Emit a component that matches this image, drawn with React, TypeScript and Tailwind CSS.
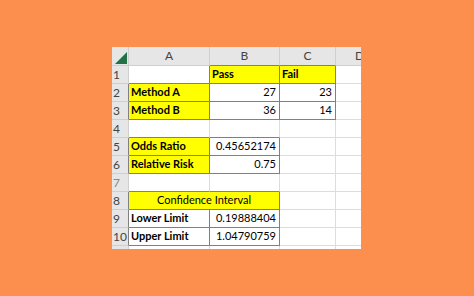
import clsx from 'clsx'

type Cell = { t?: string, b?: boolean, y?: boolean, box?: boolean, r?: boolean, c?: boolean, span?: number }

const colLetters = ['A','B','C','D']

// rows 1..11, columns A..D
const data: Cell[][] = [
  [{}, { t:'Pass', b:true, y:true, box:true }, { t:'Fail', b:true, y:true, box:true }, {}],
  [{ t:'Method A', b:true, y:true, box:true }, { t:'27', r:true, box:true }, { t:'23', r:true, box:true }, {}],
  [{ t:'Method B', b:true, y:true, box:true }, { t:'36', r:true, box:true }, { t:'14', r:true, box:true }, {}],
  [{}, {}, {}, {}],
  [{ t:'Odds Ratio', b:true, y:true, box:true }, { t:'0.45652174', r:true, box:true }, {}, {}],
  [{ t:'Relative Risk', b:true, y:true, box:true }, { t:'0.75', r:true, box:true }, {}, {}],
  [{}, {}, {}, {}],
  [{ t:'Confidence Interval', y:true, box:true, c:true, span:2 }, { box:true }, {}, {}],
  [{ t:'Lower Limit', b:true, box:true }, { t:'0.19888404', r:true, box:true }, {}, {}],
  [{ t:'Upper Limit', b:true, box:true }, { t:'1.04790759', r:true, box:true }, {}, {}],
  [{}, {}, {}, {}],
]

const boxed = (r:number, c:number) => !!data[r]?.[c]?.box

export default function App(){
  return (
    <div className="w-[474px] h-[296px] bg-[#fd8f4e] pl-[112px] pt-[47px]" style={{ fontFamily: 'Lato, "Liberation Sans", sans-serif' }}>
      <div className="w-[249px] h-[202px] overflow-hidden bg-white">
        <div className="grid grid-cols-[17px_81px_70px_56px_48px] grid-rows-[19px_repeat(11,18px)] w-[272px]">
          {/* corner */}
          <div className="relative bg-[#e6e6e6] border-r border-b border-[#cfcfcf]">
            <svg className="absolute right-[1px] bottom-[1px]" width="12" height="12" viewBox="0 0 12 12">
              <polygon points="12,0 12,12 0,12" fill="#217346" />
            </svg>
          </div>
          {colLetters.map((l, c) => (
            <div key={l} className={clsx('bg-[#e6e6e6] border-r border-[#cfcfcf] border-b flex items-center justify-center text-[12px] text-[#444]',
              boxed(0, c) ? 'border-b-[#808080]' : 'border-b-[#cfcfcf]')}>{l}</div>
          ))}
          {data.map((row, r) => (
            <Row key={r} row={row} r={r} />
          ))}
        </div>
      </div>
    </div>
  )
}

function Row({ row, r }:{ row:Cell[], r:number }){
  return (
    <>
      <div className={clsx('bg-[#e6e6e6] border-b border-b-[#cfcfcf] border-r pl-[1px] flex items-center text-[12px]',
        r === 6 ? 'text-[#8a8a8a]' : 'text-[#444]',
        boxed(r, 0) ? 'border-r-[#808080]' : 'border-r-[#cfcfcf]')}>{r + 1}</div>
      {row.map((cell, c) => {
        if (r === 7 && c === 1) return null
        const lastCol = cell.span ? c + cell.span - 1 : c
        const rightDark = boxed(r, lastCol) || boxed(r, lastCol + 1)
        const bottomDark = cell.box || boxed(r + 1, c)
        return (
          <div key={c} className={clsx('border-r border-b flex items-center px-[2px] text-[11px] text-black whitespace-nowrap overflow-hidden',
            cell.span === 2 && 'col-span-2',
            cell.y ? 'bg-[#ffff00]' : 'bg-white',
            cell.b && 'font-bold',
            cell.r && 'justify-end pr-[3px]',
            cell.c && 'justify-center',
            rightDark ? 'border-r-[#808080]' : 'border-r-[#dcdcdc]',
            bottomDark ? 'border-b-[#808080]' : 'border-b-[#dcdcdc]')}>
            {cell.t}
          </div>
        )
      })}
    </>
  )
}
